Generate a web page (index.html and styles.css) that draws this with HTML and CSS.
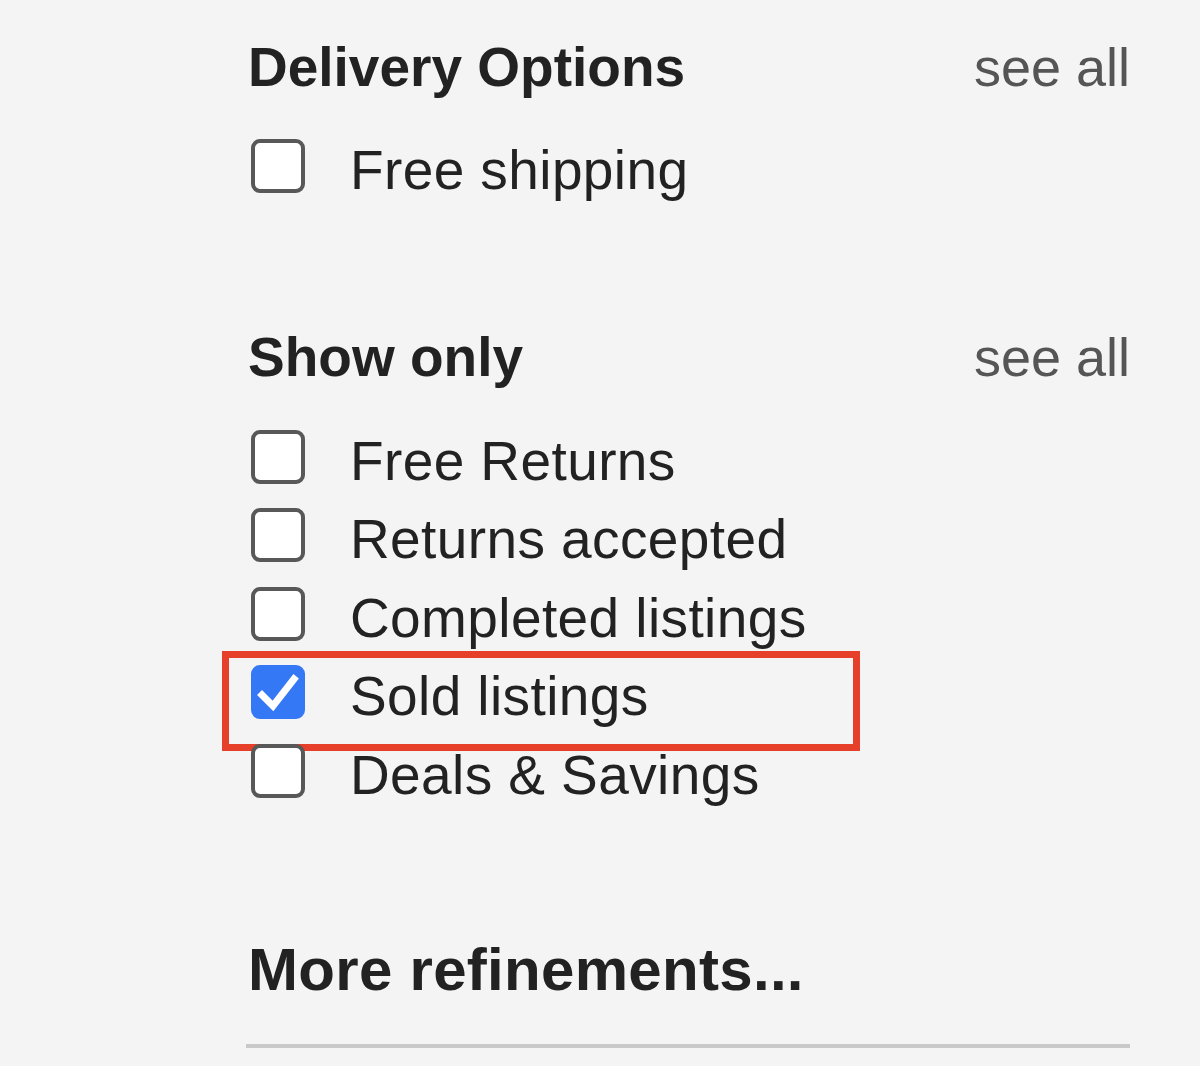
FILE: index.html
```html
<!DOCTYPE html>
<html lang="en">
<head>
    <meta charset="UTF-8">
    <meta name="viewport" content="width=device-width, initial-scale=1.0">
    <title>Refine results</title>
    <link rel="stylesheet" href="styles.css">
</head>
<body>
    <div class="sidebar">
        <div class="group delivery">
            <div class="group-head">
                <h3>Delivery Options</h3>
                <a class="see-all" href="#">see all</a>
            </div>
            <label class="option"><span class="box"></span>Free shipping</label>
        </div>

        <div class="group show-only">
            <div class="group-head">
                <h3>Show only</h3>
                <a class="see-all" href="#">see all</a>
            </div>
            <label class="option"><span class="box"></span>Free Returns</label>
            <label class="option"><span class="box"></span>Returns accepted</label>
            <label class="option"><span class="box"></span>Completed listings</label>
            <label class="option selected">
                <span class="box checked">
                    <svg viewBox="0 0 54 54" width="54" height="54">
                        <path d="M11 30 L22 41 L43 14" fill="none" stroke="#fff" stroke-width="7" stroke-linecap="square" stroke-linejoin="miter"/>
                    </svg>
                </span>Sold listings
                <span class="highlight"></span>
            </label>
            <label class="option"><span class="box"></span>Deals &amp; Savings</label>
        </div>

        <div class="more">More refinements...</div>
        <div class="rule"></div>
    </div>
</body>
</html>
```

FILE: styles.css
```css
body {
    margin: 0;
    padding: 0;
    background-color: #f4f4f4; /* light grey page */
    font-family: "Liberation Sans", Arial, sans-serif;
    color: #1f1f1f;
}
.sidebar {
    margin-left: 248px;
    width: 882px;
    padding-top: 34px;
}
.group-head {
    display: flex;
    justify-content: space-between;
    align-items: baseline;
    height: 66px;
}
.group-head h3 {
    margin: 0;
    font-size: 55px;
    line-height: 66px;
    font-weight: bold;
    color: #222;
}
.see-all {
    font-size: 54px;
    line-height: 66px;
    color: #555;
    text-decoration: none;
}
.delivery .group-head {
    margin-bottom: 31px;
}
.show-only {
    margin-top: 114px;
}
.show-only .group-head {
    margin-bottom: 32px;
}
.option {
    position: relative;
    display: flex;
    align-items: flex-start;
    height: 78.5px;
    font-size: 55px;
    line-height: 78px;
    letter-spacing: 0.4px;
    color: #222;
}
.box {
    box-sizing: border-box;
    width: 54px;
    height: 54px;
    margin: 8px 45px 0 3px;
    border: 4px solid #585858;
    border-radius: 9px;
    background: #fff;
    flex-shrink: 0;
}
.box.checked {
    border: none;
    background: #3478f6; /* blue checked state */
}
.box svg {
    display: block;
}
.highlight {
    position: absolute;
    left: -26px;
    top: -6px;
    width: 638px;
    height: 100px;
    box-sizing: border-box;
    border: 7px solid #e63f2a; /* red annotation */
}
.more {
    margin-top: 120px;
    font-size: 60px;
    line-height: 72px;
    font-weight: bold;
    color: #222;
    letter-spacing: 0.3px;
}
.rule {
    margin-top: 38px;
    margin-left: -2px;
    height: 4px;
    background: #c9c9c9;
}
```
